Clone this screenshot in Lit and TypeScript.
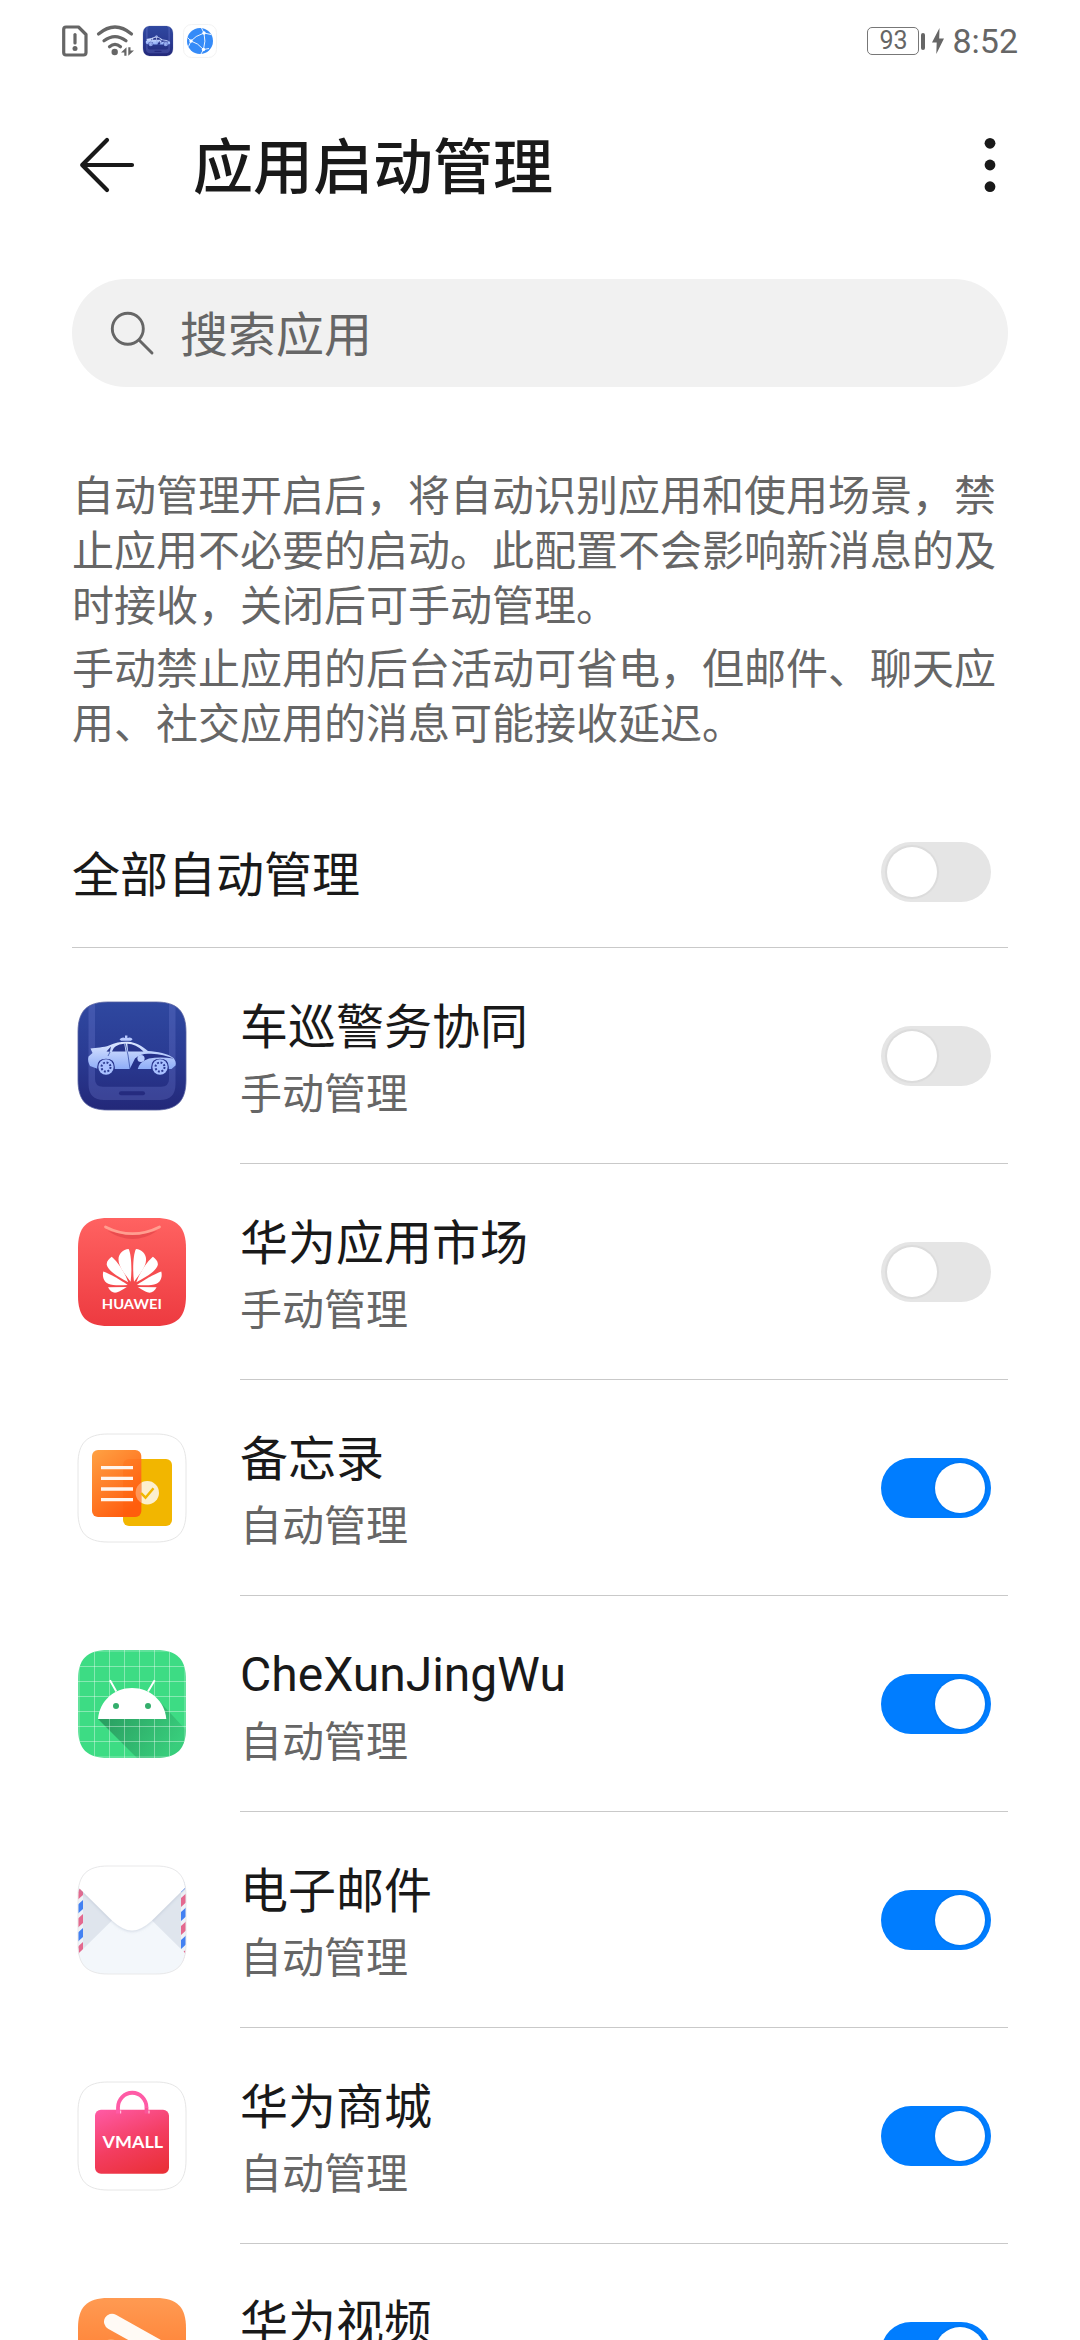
import { LitElement, html, css, svg, TemplateResult } from "lit";
import { customElement, property } from "lit/decorators.js";
import { classMap } from "lit/directives/class-map.js";

const SQUIRCLE =
  "M0 30C0 9 9 0 30 0H78C99 0 108 9 108 30V78C108 99 99 108 78 108H30C9 108 0 99 0 78Z";

const carIcon = svg`
  <defs>
    <linearGradient id="car-bg" x1="0" y1="0" x2="0" y2="1">
      <stop offset="0" stop-color="#2f48a0"/><stop offset="0.5" stop-color="#2a3b93"/><stop offset="1" stop-color="#232879"/>
    </linearGradient>
    <linearGradient id="car-body" x1="0" y1="0" x2="0" y2="1">
      <stop offset="0" stop-color="#dde7ff"/><stop offset="1" stop-color="#8fadf8"/>
    </linearGradient>
    <clipPath id="car-clip"><path d="${SQUIRCLE}"/></clipPath>
  </defs>
  <g clip-path="url(#car-clip)">
    <rect width="108" height="108" fill="url(#car-bg)"/>
    <path d="M10.500-2V82Q10.500 98 26 98H82Q97.500 98 97.500 82V-2H91V77Q91 84.700 83 84.700H25Q17 84.700 17 77V-2Z" fill="#7f8be0" fill-opacity="0.25"/>
    <rect x="41" y="89.200" width="26" height="4" rx="2" fill="#252b7f"/>
  </g>
  <path d="${SQUIRCLE}" fill="none" stroke="#55609f" stroke-width="0.800"/>
  <path d="M41.500 37.200q3-2.700 5.500-1.200v-2.500h2.400v2.500q3.500-1.500 5.200 1.200l-1.600 1.500h-10z" fill="#b9caff"/>
  <path d="M12.500 46.500C18 45.500 26 45.500 31 43.500C38 40.300 44 39.500 50 39.800C58 40.500 63 43.500 70 49C79 49.700 90 51.500 95.500 56C97.500 58.500 98.300 61 97.500 63.500L93.500 67H20L12 64C10.500 61 9.500 58 10.500 54.500L14.500 51Z" fill="url(#car-body)"/>
  <path d="M28.500 49.500L33 44.500L31.800 49.800ZM34 49.500Q35.500 42.800 46.300 41.800L47.500 49.500ZM49.300 41.800Q58 42 65.500 49.500H50.200Z" fill="#28358b"/>
  <path d="M47.200 41.500L50 53L52 67M32 50L30 54" fill="none" stroke="#3950a8" stroke-width="0.800"/>
  <path d="M51.500 67.500L57 56.500Q63 50.800 73 51.800Q86 52.500 95.500 56.500Q82 54.300 71 56.500Q62 59 59.500 67.500Z" fill="#26318a"/>
  <circle cx="63" cy="56.500" r="3.600" fill="#b8cbff"/>
  <path d="M19.200 68V65Q19.200 56.700 28 56.700T36.800 65V68ZM73.200 68V65Q73.200 56.700 82 56.700T90.800 65V68Z" fill="#26318a"/>
  <circle cx="28" cy="65" r="7.700" fill="#a9c0ff"/><circle cx="28" cy="65" r="4.500" fill="none" stroke="#2d3c93" stroke-width="2" stroke-dasharray="1.900 1.633"/>
  <circle cx="82" cy="65" r="7.700" fill="#a9c0ff"/><circle cx="82" cy="65" r="4.500" fill="none" stroke="#2d3c93" stroke-width="2" stroke-dasharray="1.900 1.633"/>`;

const petals = svg`
  <path d="M52.600 63.800C47 56 40.500 49 40.500 41.500C40.500 35.500 45 31.500 50.600 31C53.300 35.500 54.200 52 52.600 63.800Z"/>
  <path d="M50.200 64.200C43 60 30.500 54 28.800 47C28.200 43.500 31 40.500 33.700 38.700C39 43 47 54.500 50.200 64.200Z"/>
  <path d="M49.700 67C43 62 32 56 25.300 53.500C24.200 58 25.200 63.200 30.200 65.800C35 67.800 43 67.400 49.700 67Z"/>
  <path d="M48.700 69.100L30 69.300C32 73 35 75.300 38.500 74.500C42 73.500 46 71 48.700 69.100Z"/>`;

const marketIcon = svg`
  <defs><linearGradient id="mk-bg" x1="0" y1="0" x2="0" y2="1">
    <stop offset="0" stop-color="#ff6261"/><stop offset="1" stop-color="#ed3a40"/></linearGradient></defs>
  <path d="${SQUIRCLE}" fill="url(#mk-bg)"/>
  <path d="M30 13Q54.500 29 79 13Q54 20 30 13Z" fill="#d83c42" fill-opacity="0.500"/>
  <path d="M27.500 8.900Q54.500 22.500 81.500 8.900" fill="none" stroke="#ff9e90" stroke-width="2.800" stroke-linecap="round"/>
  <g fill="#fff">${petals}<g transform="translate(108.600 0) scale(-1 1)">${petals}</g></g>
  <text class="brand" x="23.800" y="91.200" font-size="13.500" textLength="60" lengthAdjust="spacingAndGlyphs">HUAWEI</text>`;

const frame = svg`<path d="${SQUIRCLE}" fill="#fff" stroke="#e6e6e6" stroke-width="1"/>`;

const notesIcon = svg`
  <defs>
    <linearGradient id="nt-a" x1="0" y1="0" x2="0.600" y2="1"><stop offset="0" stop-color="#ffa244"/><stop offset="1" stop-color="#ff5e10"/></linearGradient>
    <clipPath id="nt-clip"><rect x="14" y="16" width="49.300" height="67" rx="6"/></clipPath>
  </defs>
  ${frame}
  <rect x="45" y="25" width="49" height="67" rx="6" fill="#f2b600"/>
  <circle cx="69.300" cy="58.700" r="11.700" fill="#fcefcf"/>
  <rect x="14" y="16" width="49.300" height="67" rx="6" fill="url(#nt-a)"/>
  <g clip-path="url(#nt-clip)">
    <rect x="45" y="25" width="49" height="67" rx="6" fill="#ff5a00" fill-opacity="0.200"/>
    <circle cx="69.300" cy="58.700" r="11.700" fill="#ffa46a" fill-opacity="0.800"/>
  </g>
  <path d="M63 59L67.500 63.700L75.500 54.300" fill="none" stroke="#f2b600" stroke-width="2.500"/>
  <path d="M23 33.700H55M23 44.300H55M23 55H55M23 65.700H55" stroke="#fff5ee" stroke-width="3.300"/>`;

const androidIcon = svg`
  <defs>
    <clipPath id="an-clip"><path d="${SQUIRCLE}"/></clipPath>
    <linearGradient id="an-sh" gradientUnits="userSpaceOnUse" x1="30" y1="66" x2="88" y2="108">
      <stop offset="0" stop-color="#2aa062"/><stop offset="1" stop-color="#2aa062" stop-opacity="0.250"/></linearGradient>
  </defs>
  <g clip-path="url(#an-clip)">
    <rect width="108" height="108" fill="#3ddc84"/>
    <path d="M20 69L60 109H109V81L82 52Z" fill="url(#an-sh)"/>
    <path d="M1 0V108M16.500 0V108M31.500 0V108M46.500 0V108M61.500 0V108M76.500 0V108M91.500 0V108M107 0V108M0 1H108M0 16.500H108M0 31.500H108M0 46.500H108M0 61.500H108M0 76.500H108M0 91.500H108M0 107H108" stroke="#fff" stroke-opacity="0.420" stroke-width="0.900"/>
  </g>
  <path d="M20 69C21.500 51 36 38 54 38S86.800 51 88.300 69Z" fill="#fff"/>
  <path d="M32 30.300L38.300 41.500M76.700 30.300L70 41.500" stroke="#fff" stroke-width="1.900"/>
  <circle cx="38" cy="56" r="3" fill="#34ae6c"/><circle cx="70" cy="56" r="3" fill="#34ae6c"/>`;

const stripe = (x: number, y: number, i: number) =>
  svg`<path d="M${x} ${y + 4.5}L${x + 5} ${y}V${y + 9}L${x} ${y + 13.5}Z" fill="${i % 2 ? "#4381f2" : "#e4698f"}"/>`;

const mailIcon = svg`
  <defs>
    <clipPath id="ml-clip"><path d="${SQUIRCLE}"/></clipPath>
    <filter id="ml-f" x="-20%" y="-20%" width="140%" height="150%"><feDropShadow dx="0" dy="1" stdDeviation="1.500" flood-color="#8f9bb5" flood-opacity="0.350"/></filter>
  </defs>
  <g clip-path="url(#ml-clip)">
    <rect width="108" height="108" fill="#dfe5ed"/>
    <path d="M0 0H5V108H0ZM103 0H108V108H103Z" fill="#eef2f7"/>
    ${[20, 34, 48, 62, 76].map((y, i) => stripe(0, y, i))}
    ${[13, 27.5, 41.5, 55.5, 69.5, 83.5].map((y, i) => stripe(103, y, i + 1))}
    <path d="M-2 90L36 52.500H72L110 90V110H-2Z" fill="#f3f7fb"/>
    <path d="M-3 18L34 54.500Q45 64.500 54 64.500T74 54.500L111 18V-5H-3Z" fill="#fff" filter="url(#ml-f)"/>
  </g>
  <path d="${SQUIRCLE}" fill="none" stroke="#e9e9ea" stroke-width="1"/>`;

const vmallIcon = svg`
  <defs><linearGradient id="vm-g" gradientUnits="userSpaceOnUse" x1="32" y1="22" x2="62" y2="98">
    <stop offset="0" stop-color="#ff5ba6"/><stop offset="0.550" stop-color="#f33d60"/><stop offset="1" stop-color="#ea3038"/></linearGradient></defs>
  ${frame}
  <rect x="17" y="27.700" width="74" height="64" rx="6" fill="url(#vm-g)"/>
  <path d="M40 31.500V25.500A14.200 14.700 0 0 1 68.500 25.500" fill="none" stroke="#ff5ba6" stroke-width="3.800"/>
  <path d="M68.500 25.200V31.500" fill="none" stroke="#fb559a" stroke-width="3.800"/>
  <path d="M42.600 28.500V31.500M71 28.500V31.500" stroke="#ffc0dc" stroke-width="1.200"/>
  <text class="brand" x="24.600" y="65.700" font-size="17" textLength="60.500" lengthAdjust="spacingAndGlyphs">VMALL</text>`;

const videoIcon = svg`
  <defs><linearGradient id="vd-g" x1="0" y1="0" x2="0" y2="1"><stop offset="0" stop-color="#ff9a52"/><stop offset="1" stop-color="#ff6f20"/></linearGradient></defs>
  <path d="${SQUIRCLE}" fill="url(#vd-g)"/>
  <path d="M33 48V84" stroke="#ffa561" stroke-width="14" stroke-linecap="round"/>
  <path d="M34 23.700L88 54" stroke="#fffaf5" stroke-width="16" stroke-linecap="round"/>`;

interface AppEntry {
  name: string;
  auto: boolean;
  icon: TemplateResult;
}

const APPS: AppEntry[] = [
  { name: "车巡警务协同", auto: false, icon: carIcon },
  { name: "华为应用市场", auto: false, icon: marketIcon },
  { name: "备忘录", auto: true, icon: notesIcon },
  { name: "CheXunJingWu", auto: true, icon: androidIcon },
  { name: "电子邮件", auto: true, icon: mailIcon },
  { name: "华为商城", auto: true, icon: vmallIcon },
  { name: "华为视频", auto: true, icon: videoIcon },
];

const INTRO = [
  "自动管理开启后，将自动识别应用和使用场景，禁止应用不必要的启动。此配置不会影响新消息的及时接收，关闭后可手动管理。",
  "手动禁止应用的后台活动可省电，但邮件、聊天应用、社交应用的消息可能接收延迟。",
];

@customElement("toggle-switch")
export class ToggleSwitch extends LitElement {
  @property({ type: Boolean }) on = false;

  static styles = css`
    :host { display: block; flex: none; }
    .track {
      box-sizing: border-box;
      width: 110px;
      height: 60px;
      padding: 5px 6px;
      border-radius: 30px;
      display: flex;
      background: #e5e5e5;
    }
    .track.on { background: #007dff; justify-content: flex-end; }
    .knob {
      width: 50px;
      height: 50px;
      border-radius: 50%;
      background: #fff;
      box-shadow: 0 0 1px 2px rgba(0, 0, 0, 0.045);
    }
  `;

  render() {
    return html`<div class=${classMap({ track: true, on: this.on })}><div class="knob"></div></div>`;
  }
}

@customElement("app-root")
export class AppRoot extends LitElement {
  static styles = css`
    :host {
      display: flex;
      flex-direction: column;
      width: 1080px;
      height: 2340px;
      overflow: hidden;
      background: #fff;
      color: #191919;
      font-family: Roboto, "Noto Sans CJK SC", sans-serif;
    }
    svg { display: block; flex: none; overflow: visible; }
    .brand { fill: #fff; font-family: Lato, sans-serif; font-weight: 700; }
    .status {
      flex: none;
      height: 82px;
      box-sizing: border-box;
      padding: 0 62px;
      display: flex;
      align-items: center;
      color: #666;
    }
    .sim { margin-right: 7px; }
    .wifi { margin-right: 9px; }
    .mini { margin-right: 10px; }
    .space { flex: 1; }
    .battery {
      box-sizing: border-box;
      width: 52px;
      height: 28px;
      border: 1.5px solid #777;
      border-radius: 5px;
      font-size: 25px;
      line-height: 26px;
      text-align: center;
    }
    .nub { width: 4px; height: 17px; border-radius: 2px; background: #666; margin: 0 7px 0 2px; }
    .bolt { margin-right: 8px; }
    .clock { font-size: 34px; line-height: 40px; }
    .header {
      flex: none;
      height: 166px;
      padding: 0 84px 0 79px;
      display: flex;
      align-items: center;
    }
    .title {
      flex: 1;
      margin: 0 0 0 58px;
      padding-top: 8px;
      font-size: 60px;
      line-height: 80px;
      font-weight: 500;
    }
    .search {
      flex: none;
      margin: 31px 72px 0;
      height: 108px;
      border-radius: 54px;
      background: #f1f1f1;
      display: flex;
      align-items: center;
      color: #666;
      font-size: 48px;
      line-height: 60px;
    }
    .search svg { margin: 0 24px 0 38px; }
    .search span { padding-top: 5px; }
    .intro {
      flex: none;
      margin: 82px 72px 0;
      color: #666;
      font-size: 42px;
      line-height: 55px;
    }
    .intro p { margin: 0 0 8px; }
    .all {
      flex: none;
      margin: 37px 72px 0;
      height: 150px;
      padding-right: 17px;
      display: flex;
      align-items: center;
      justify-content: space-between;
      border-bottom: 1px solid #c9c9c9;
      font-size: 48px;
      line-height: 60px;
    }
    .all span { padding-top: 7px; }
    .row {
      flex: none;
      height: 216px;
      margin: 0 72px 0 78px;
      display: flex;
      align-items: center;
      gap: 54px;
    }
    .body {
      flex: 1;
      height: 216px;
      box-sizing: border-box;
      padding-right: 17px;
      display: flex;
      align-items: center;
      justify-content: space-between;
      box-shadow: inset 0 -1px #c9c9c9;
    }
    .label { padding-top: 8px; }
    .name { font-size: 48px; line-height: 62px; margin-bottom: 8px; }
    .name.latin { line-height: 60px; margin-bottom: 10px; }
    .mode { font-size: 42px; line-height: 56px; color: #666; }
  `;

  private statusBar() {
    return html`
      <div class="status">
        <svg class="sim" width="27" height="32" viewBox="0 0 27 32" fill="none" stroke="#666">
          <path d="M4 2H16.500L24 9.500V27.500Q24 30 21.500 30H4Q1.700 30 1.700 27.500V4.500Q1.700 2 4 2Z" stroke-width="3.200" stroke-linejoin="round"/>
          <path d="M13 9.500V18" stroke-width="3.200" stroke-linecap="round"/>
          <circle cx="13" cy="23.500" r="2.500" fill="#666" stroke="none"/>
        </svg>
        <svg class="wifi" width="38" height="32" viewBox="0 0 38 32" fill="none" stroke="#666" stroke-width="3.200" stroke-linecap="round">
          <path d="M2.500 9Q19-5 35.500 9M8 15.800Q19 7.500 30 15.800M13.500 21.800Q19 17 24.500 21.800"/>
          <circle cx="18.700" cy="27" r="3.200" fill="#666" stroke="none"/>
          <path d="M30.500 22.300V30.800H28.300V27.500H25ZM32.300 30.800V22.300H34.500V25.500H38Z" fill="#666" stroke="none"/>
        </svg>
        <svg class="mini" width="30" height="30" viewBox="0 0 108 108">${carIcon}</svg>
        <svg width="34" height="34" viewBox="0 0 34 34" fill="none">
          <rect x="0.500" y="0.500" width="33" height="33" rx="8" fill="#fff" stroke="#f3f3f3"/>
          <circle cx="17" cy="17" r="13" fill="#358bf8"/>
          <path d="M8 17Q12 12 21 9M8 17Q15 19 20.500 25.500M21 9Q23 17 20.500 25.500M21 9L18.500 4M21 9L28 10.500M8 17L4.500 13.500M8 17L5.500 22.500M20.500 25.500L18 30M20.500 25.500L26 24.500" stroke="#fff" stroke-width="0.900"/>
          <circle cx="8" cy="17" r="1.700" fill="#fff"/><circle cx="21" cy="9" r="1.700" fill="#fff"/><circle cx="20.500" cy="25.500" r="1.700" fill="#fff"/>
        </svg>
        <div class="space"></div>
        <div class="battery">93</div>
        <div class="nub"></div>
        <svg class="bolt" width="12" height="26" viewBox="0 0 12 26"><path d="M7.500 0L0 14.500H4.700L4.300 26L12 10.500H7.200Z" fill="#666"/></svg>
        <div class="clock">8:52</div>
      </div>
    `;
  }

  private row(app: AppEntry) {
    const latin = /^[\x20-\x7e]+$/.test(app.name);
    return html`
      <div class="row">
        <svg width="108" height="108" viewBox="0 0 108 108">${app.icon}</svg>
        <div class="body">
          <div class="label">
            <div class=${classMap({ name: true, latin })}>${app.name}</div>
            <div class="mode">${app.auto ? "自动管理" : "手动管理"}</div>
          </div>
          <toggle-switch ?on=${app.auto}></toggle-switch>
        </div>
      </div>
    `;
  }

  render() {
    return html`
      ${this.statusBar()}
      <div class="header">
        <svg width="56" height="56" viewBox="0 0 56 56" fill="none" stroke="#191919" stroke-width="4.200" stroke-linecap="round" stroke-linejoin="round">
          <path d="M28 3L3.200 28L28 53M3.200 28H53"/>
        </svg>
        <h1 class="title">应用启动管理</h1>
        <svg width="12" height="56" viewBox="0 0 12 56" fill="#191919">
          <circle cx="6" cy="6.300" r="5.400"/><circle cx="6" cy="28" r="5.400"/><circle cx="6" cy="49.700" r="5.400"/>
        </svg>
      </div>
      <div class="search">
        <svg width="46" height="46" viewBox="0 0 46 46" fill="none" stroke="#666" stroke-width="2.900" stroke-linecap="round">
          <circle cx="17.800" cy="18.700" r="15.500"/><path d="M29.500 30.500L42 43"/>
        </svg>
        <span>搜索应用</span>
      </div>
      <div class="intro">${INTRO.map((t) => html`<p>${t}</p>`)}</div>
      <div class="all"><span>全部自动管理</span><toggle-switch></toggle-switch></div>
      ${APPS.map((a) => this.row(a))}
    `;
  }
}
